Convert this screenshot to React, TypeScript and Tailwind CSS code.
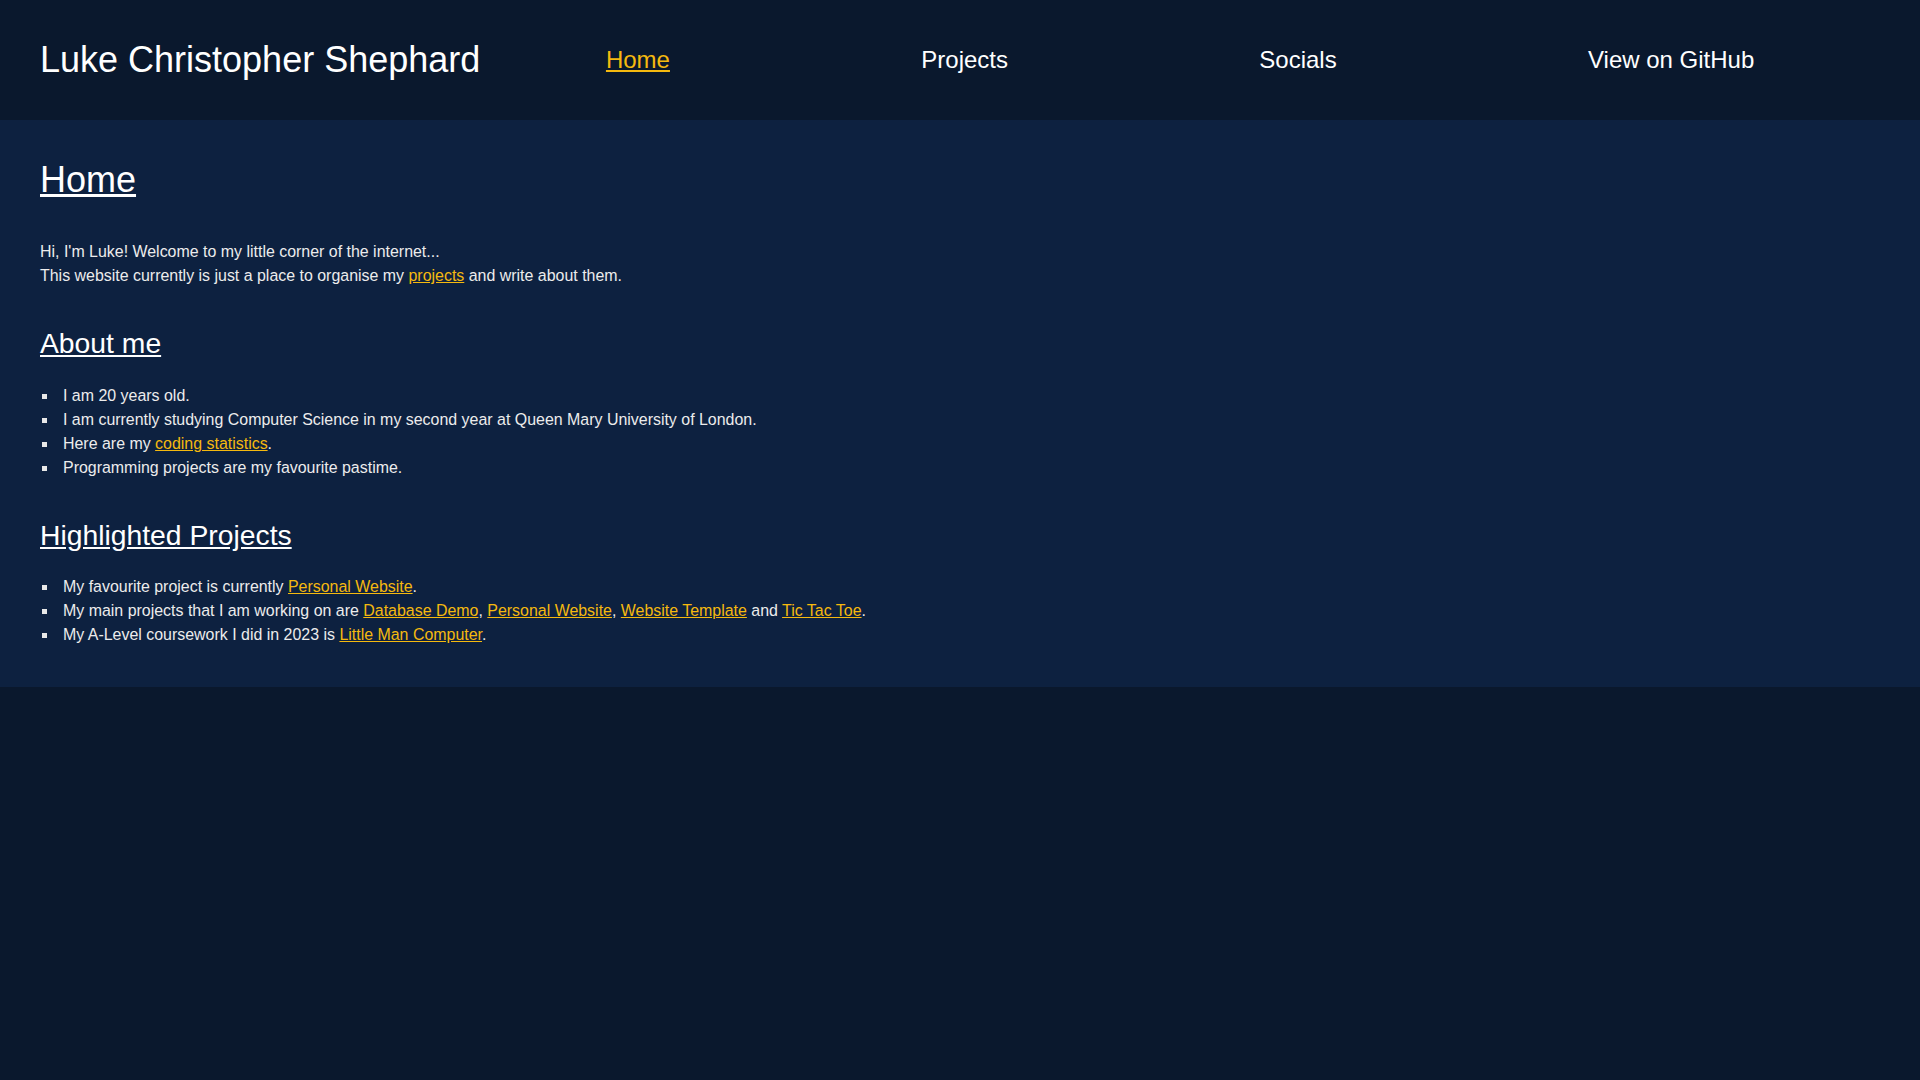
import React from 'react';

const font = { fontFamily: '"Liberation Sans", Arial, sans-serif' };

function A({ children, href = '#' }: { children: React.ReactNode; href?: string }) {
  return (
    <a href={href} className="text-[#f5b90f] underline">
      {children}
    </a>
  );
}

function Item({ children }: { children: React.ReactNode }) {
  return (
    <li className="flex items-center">
      <span className="ml-[2px] mr-[16px] inline-block h-[5px] w-[5px] shrink-0 bg-[#e8e8e8]" />
      <span>{children}</span>
    </li>
  );
}

export default function App() {
  const nav = ['Home', 'Projects', 'Socials', 'View on GitHub'];

  return (
    <div className="min-h-screen bg-[#0a182d] text-[#ececec]" style={font}>
      <header className="flex h-[120px] items-center bg-[#0a182d] px-10">
        <h1 className="text-[36px] leading-[1.2] text-white">Luke Christopher Shephard</h1>
        <nav className="flex flex-1 justify-around text-[24px]">
          {nav.map((n, i) => (
            <a
              key={n}
              href="#"
              className={i === 0 ? 'text-[#f5b90f] underline' : 'text-white'}
            >
              {n}
            </a>
          ))}
        </nav>
      </header>

      <main className="bg-[#0d2140] px-10 pb-[40px] pt-[38px] text-[15.95px] leading-[24px]">
        <h1 className="text-[36px] leading-[1.2] text-white underline">Home</h1>
        <p className="mt-[39px]">
          Hi, I'm Luke! Welcome to my little corner of the internet...
          <br />
          This website currently is just a place to organise my <A>projects</A> and write about them.
        </p>

        <h2 className="mt-[39px] text-[28.3px] leading-[1.2] text-white underline">About me</h2>
        <ul className="mt-[23px]">
          <Item>I am 20 years old.</Item>
          <Item>I am currently studying Computer Science in my second year at Queen Mary University of London.</Item>
          <Item>
            Here are my <A>coding statistics</A>.
          </Item>
          <Item>Programming projects are my favourite pastime.</Item>
        </ul>

        <h2 className="mt-[39px] text-[28.3px] leading-[1.2] text-white underline">Highlighted Projects</h2>
        <ul className="mt-[22px]">
          <Item>
            My favourite project is currently <A>Personal Website</A>.
          </Item>
          <Item>
            My main projects that I am working on are <A>Database Demo</A>, <A>Personal Website</A>,{' '}
            <A>Website Template</A> and <A>Tic Tac Toe</A>.
          </Item>
          <Item>
            My A-Level coursework I did in 2023 is <A>Little Man Computer</A>.
          </Item>
        </ul>
      </main>
    </div>
  );
}
